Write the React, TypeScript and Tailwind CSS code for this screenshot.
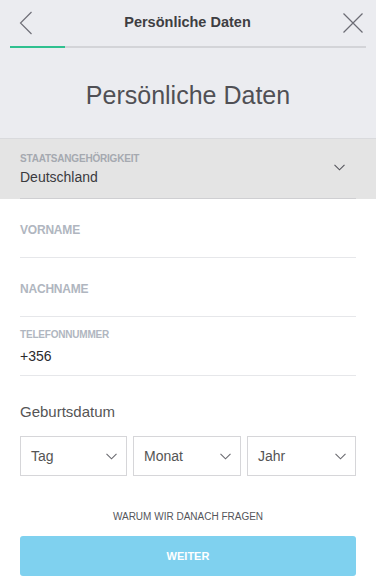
const font = { fontFamily: '"Liberation Sans", Arial, sans-serif' };

const Chevron = ({ color = "#6a6a70" }: { color?: string }) => (
  <svg width="11" height="7" viewBox="0 0 11 7" fill="none" stroke={color} strokeWidth="1.1">
    <path d="M0.5 0.8 L5.5 5.8 L10.5 0.8" />
  </svg>
);

const Select = ({ label }: { label: string }) => (
  <div className="h-[40px] border border-[#d6d6d9] flex items-center justify-between pl-[10px] pr-[9px]">
    <span className="text-[14px] text-[#555]">{label}</span>
    <Chevron />
  </div>
);

const Field = ({ label }: { label: string }) => (
  <div className="h-[59px] border-b border-[#e6e7ea] flex items-center pt-[4px]">
    <span className="text-[12px] font-bold text-[#b0b6c0] tracking-[-0.2px]">{label}</span>
  </div>
);

export default function App() {
  return (
    <div className="w-[376px] h-[588px] bg-white overflow-hidden" style={font}>
      {/* header */}
      <div className="bg-[#ebecf0] border-b border-[#d9dadd]">
        <div className="h-[46px] flex items-center justify-between pl-[19px] pr-[12px]">
          <svg width="14" height="24" viewBox="0 0 14 24" fill="none" stroke="#707078" strokeWidth="1.2">
            <path d="M12.5 1 L1.5 12 L12.5 23" />
          </svg>
          <span className="text-[14.5px] font-bold text-[#3e3e42]">Persönliche Daten</span>
          <svg width="22" height="22" viewBox="0 0 22 22" fill="none" stroke="#6c6c74" strokeWidth="1.2">
            <path d="M1.5 1.5 L20.5 20.5 M20.5 1.5 L1.5 20.5" />
          </svg>
        </div>
        <div className="mx-[10px] h-[2px] bg-[#d3d4d8] flex">
          <div className="w-[55px] bg-[#2fc08f]" />
        </div>
        <div className="pt-[30px] pb-[26px] text-center text-[25px] leading-[34px] font-light text-[#505055]">
          Persönliche Daten
        </div>
      </div>

      {/* nationality */}
      <div className="bg-[#e4e4e4] px-[20px]">
        <div className="pt-[13px] pb-[11px] border-b border-[#cfcfd2] flex items-center justify-between">
          <div className="flex flex-col">
            <span className="text-[10px] leading-[14px] font-bold text-[#a5a9b0] tracking-[-0.2px]">STAATSANGEHÖRIGKEIT</span>
            <span className="text-[14px] leading-[20px] mt-[1px] text-[#3a3a3e]">Deutschland</span>
          </div>
          <div className="mr-[11px] -mt-[4px]">
            <Chevron color="#55555c" />
          </div>
        </div>
      </div>

      {/* form */}
      <div className="px-[20px]">
        <Field label="VORNAME" />
        <Field label="NACHNAME" />
        <div className="h-[59px] border-b border-[#e6e7ea] flex flex-col pt-[11px]">
          <span className="text-[10px] leading-[14px] font-bold text-[#b0b6c0] tracking-[-0.2px]">TELEFONNUMMER</span>
          <span className="text-[14px] leading-[18px] mt-[5px] text-[#2a2a2e]">+356</span>
        </div>
        <div className="pt-[26px] text-[15px] leading-[20px] text-[#555]">Geburtsdatum</div>
        <div className="mt-[14px] grid grid-cols-[107px_108px_1fr] gap-[6px]">
          <Select label="Tag" />
          <Select label="Monat" />
          <Select label="Jahr" />
        </div>
        <div className="mt-[35px] text-center text-[10px] leading-[12px] text-[#55565b]">
          WARUM WIR DANACH FRAGEN
        </div>
        <button className="mt-[13px] w-full h-[40px] rounded-[3px] bg-[#7fd1ef] text-white text-[11px] font-bold">
          WEITER
        </button>
      </div>
    </div>
  );
}
